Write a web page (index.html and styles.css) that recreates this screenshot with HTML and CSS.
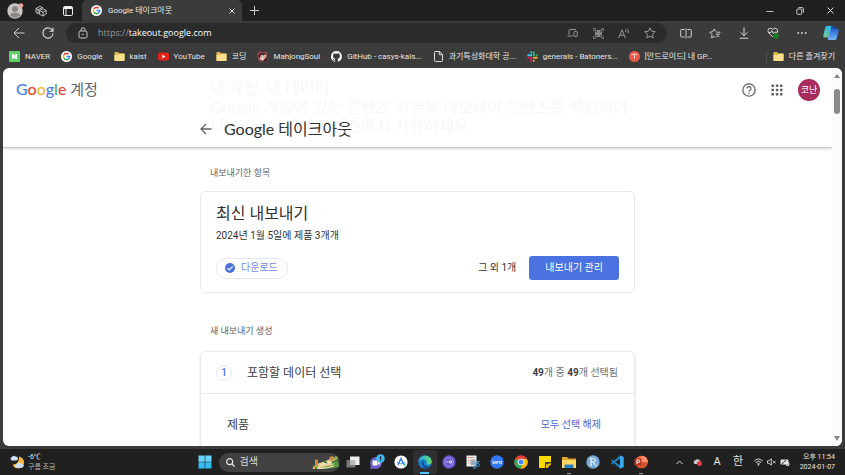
FILE: index.html
```html
<!DOCTYPE html>
<html lang="ko">
<head>
<meta charset="utf-8">
<meta name="viewport" content="width=device-width, initial-scale=1">
<title>Google 테이크아웃</title>
<link rel="stylesheet" href="styles.css">
</head>
<body>
<svg class="defs" aria-hidden="true">
  <symbol id="g" viewBox="0 0 24 24"><circle cx="12" cy="12" r="12" fill="#fff"/><g fill="none" stroke-width="3.6"><path d="M6.2 8.6A6.8 6.8 0 0 1 16.6 7" stroke="#ea4335"/><path d="M6.2 15.4a6.8 6.8 0 0 1 0-6.8" stroke="#fbbc05"/><path d="M16.4 17.2A6.8 6.8 0 0 1 6.2 15.4" stroke="#34a853"/><path d="M12 12h6.8a6.8 6.8 0 0 1-2.4 5.2" stroke="#4285f4"/></g></symbol>
  <symbol id="folder" viewBox="0 0 12 12"><path d="M.5 2q0-.8.8-.8h3l1.2 1.3h5.2q.8 0 .8.8v6.9q0 .8-.8.8H1.3q-.8 0-.8-.8z" fill="#e0b84f"/><path d="M.5 4.4h4l1.2-1h5.8v6.800q0 .8-.8.8H1.3q-.8 0-.8-.8z" fill="#f8df8b"/></symbol>
</svg>

<header class="browser">
  <div class="tabstrip">
    <button class="tool avatar-btn" aria-label="프로필"><svg width="18" height="18" viewBox="0 0 18 18"><circle cx="9" cy="9" r="7.7" fill="#c9c7c5"/><circle cx="9" cy="7" r="3" fill="#8b8885"/><path d="M4 13.5q0-3 5-3t5 3q-2 2.3-5 2.3t-5-2.3z" fill="#8b8885"/><circle cx="15" cy="3.600" r="2.300" fill="#f3a593"/></svg></button>
    <button class="tool workspace" aria-label="작업 영역"><svg width="12" height="12" viewBox="0 0 12 12" fill="none" stroke="#ccc" stroke-width=".9"><path d="M1 3.500 5 1.300l3 1.600M1 3.500v4l2 1.200M1 3.500l2 1.200 5-2.300M3 4.700v4.500M4.500 5.500 8 3.800l3.200 1.600v3.500L8 11 4.500 9.300zM4.500 5.500 8 7.200l3.200-1.800M8 7.200V11"/></svg></button>
    <button class="tool" aria-label="탭 작업 메뉴"><svg width="10" height="10" viewBox="0 0 10 10" fill="none" stroke="#eee"><rect x=".5" y=".5" width="9" height="9" rx="1.200"/><path d="M.5 2h9" stroke-width="2"/><path d="M3 3v6.500"/></svg></button>
    <div class="tab"><svg width="11" height="11"><use href="#g"/></svg><span>Google 테이크아웃</span><button class="plain" aria-label="탭 닫기"><svg width="6" height="6" viewBox="0 0 6 6" stroke="#ddd"><path d="m.5.5 5 5m0-5-5 5"/></svg></button></div>
    <button class="plain newtab" aria-label="새 탭"><svg width="9" height="9" viewBox="0 0 9 9" stroke="#ccc"><path d="M4.500 0v9M0 4.500h9"/></svg></button>
    <div class="window-controls">
      <button class="plain" aria-label="최소화"><svg width="8" height="8" viewBox="0 0 8 8" stroke="#bbb"><path d="M.5 4.500h7"/></svg></button>
      <button class="plain" aria-label="이전 크기로 복원"><svg width="8" height="8" viewBox="0 0 8 8" fill="none" stroke="#ccc"><rect x=".8" y="2" width="5" height="5.300" rx="1"/><path d="M2.500.6h3.700q1.200 0 1.200 1.200v3.700"/></svg></button>
      <button class="plain" aria-label="닫기"><svg width="7" height="7" viewBox="0 0 7 7" stroke="#ddd"><path d="m.5.5 6 6m0-6-6 6"/></svg></button>
    </div>
  </div>

  <div class="toolbar">
    <button class="tool" aria-label="뒤로"><svg width="12" height="12" viewBox="0 0 12 12" fill="none" stroke="#ccc"><path d="M11.500 6H1M6 1 1 6l5 5"/></svg></button>
    <button class="tool" aria-label="새로 고침"><svg width="12" height="12" viewBox="0 0 12 12" fill="none" stroke="#ddd" stroke-width="1.100"><path d="M10.800 4.200a5.100 5.100 0 1 0 .3 2.300M11 .8v3.500H7.600"/></svg></button>
    <div class="address">
      <svg width="10" height="12" viewBox="0 0 10 12" fill="none" stroke="#ccc"><rect x="1" y="4" width="8" height="7" rx="1.500"/><path d="M3 4V2.800a2 2 0 0 1 4 0V4"/><circle cx="5" cy="7.500" r=".4"/></svg>
      <a class="url" href="#"><span>https://</span>takeout.google.com</a>
      <div class="address-tools">
        <button class="plain" aria-label="앱 설치"><svg width="11" height="10" viewBox="0 0 11 10" fill="none" stroke="#999"><path d="M2 6.500v-4q0-1 1-1h6M.5 8h5.300"/><rect x="7" y="3.500" width="3.200" height="5" rx=".6"/></svg></button>
        <button class="plain" aria-label="QR 코드"><svg width="11" height="11" viewBox="0 0 11 11" fill="none" stroke="#999" stroke-width=".9"><path d="M.6 2.600v-2h2M8.400.6h2v2M10.400 8.400v2h-2M2.600 10.400h-2v-2"/><path d="M2.300 2.300h2.400v2.400H2.300zM6.500 2.300h2.200v2.400H6.500zM2.300 6.500h2.400v2.200H2.300zM6.500 6.500h2.200v2.200H6.500zM5.500 2v7M2 5.500h7"/></svg></button>
        <button class="plain" aria-label="소리내어 읽기"><svg width="12" height="11" viewBox="0 0 12 11" fill="none" stroke="#999"><path d="M.7 10 4 1.800 7.300 10M1.900 7.200h4.200M7 2q1.100.8 1 2.300M8.700.7q2 1.500 1.700 4.300"/></svg></button>
        <button class="plain" aria-label="즐겨찾기에 추가"><svg width="12" height="12" viewBox="0 0 12 12" fill="none" stroke="#999"><path d="m6 .9 1.600 3.300 3.600.5-2.600 2.600.6 3.600L6 9.200l-3.200 1.700.6-3.600L.8 4.700l3.600-.5z"/></svg></button>
      </div>
    </div>
    <button class="tool" aria-label="분할 화면"><svg width="12" height="11" viewBox="0 0 12 11" fill="none" stroke="#ccc"><path d="M4.500 1.500h-3q-.8 0-.8.8v5.900q0 .8.8.8h3M7.500 1.500h3q.8 0 .8.8v5.900q0 .8-.8.8h-3M6 .3v10.200"/></svg></button>
    <button class="tool" aria-label="즐겨찾기"><svg width="12" height="11" viewBox="0 0 12 11" fill="none" stroke="#ccc"><path d="M6.700 3.400 5.300.9 3.900 3.600.8 4.200 3 6.500l-.4 3.300 2.800-1.300 1.200.6M7.500 4.200h4M6.800 6.200h4M7.500 8.200h2.700"/></svg></button>
    <button class="tool" aria-label="다운로드"><svg width="10" height="12" viewBox="0 0 10 12" fill="none" stroke="#ddd"><path d="M5 .5v8M1.500 5.300 5 8.700l3.500-3.400M.8 11.200h8.400"/></svg></button>
    <button class="tool" aria-label="브라우저 기본 기능"><svg width="12" height="12" viewBox="0 0 12 12" fill="none" stroke="#ddd"><path d="M5.800 10 1.500 5.700Q.1 3.500 1.900 1.700 4 .2 5.800 2.300 7.700.2 9.700 1.700q1.700 1.700.6 3.800M1.500 5.500h2.300l1-1.800 1.700 3 .9-1.500h3"/><circle cx="9" cy="9" r="2.800" fill="#187c22" stroke="none"/></svg></button>
    <button class="tool" aria-label="설정 및 기타"><svg width="10" height="4" viewBox="0 0 10 4" fill="#ddd"><circle cx="1.300" cy="2" r=".9"/><circle cx="5" cy="2" r=".9"/><circle cx="8.700" cy="2" r=".9"/></svg></button>
    <button class="tool" aria-label="Copilot"><svg width="16" height="16" viewBox="0 0 16 16"><defs><linearGradient id="cp" x1="0" y1="0" x2="0" y2="1"><stop stop-color="#28b8ee"/><stop offset="1" stop-color="#76c98f"/></linearGradient><linearGradient id="cq" x1="0" y1="0" x2="0" y2="1"><stop stop-color="#225bd0"/><stop offset="1" stop-color="#79b6ff"/></linearGradient></defs><path d="M4 1h6q1.500 0 1 1.500L8.500 11q-.5 1.500-2 1.500H2q-2.200 0-1.600-2.500L2.300 2.400Q2.700 1 4 1z" fill="url(#cp)"/><path d="M9.500 3.500H14q2.200 0 1.600 2.500l-1.900 7.600Q13.300 15 12 15H6q-1.500 0-1-1.500L7.500 5q.5-1.500 2-1.500z" fill="url(#cq)"/><path d="M8.500 1H10q1.500 0 2 1.500l.5 1h-3Q8 3.500 7.500 5z" fill="#1648b2"/></svg></button>
  </div>

  <nav class="bookmarks" aria-label="즐겨찾기 모음">
    <a href="#"><svg width="11" height="11" viewBox="0 0 11 11"><rect width="11" height="11" rx="1" fill="#5fd068"/><path d="M3 8V3h1.700l1.700 2.400V3H8v5H6.400L4.700 5.600V8z" fill="#fff"/></svg>NAVER</a>
    <a href="#"><svg width="11" height="11"><use href="#g"/></svg>Google</a>
    <a href="#"><svg width="11" height="11"><use href="#folder"/></svg>kaist</a>
    <a href="#"><svg width="11" height="11" viewBox="0 0 11 11"><rect y="1.600" width="11" height="8" rx="2" fill="#e62117"/><path d="m4.300 3.700 3.300 1.900-3.300 1.900z" fill="#fff"/></svg>YouTube</a>
    <a href="#"><svg width="11" height="11"><use href="#folder"/></svg>코딩</a>
    <a href="#"><svg width="11" height="11" viewBox="0 0 11 11"><path d="M1 1.500 3 0l2 1.300L9 .4l1.800 2-.7 3.600.6 4.500H2L.2 5z" fill="#8f4a50"/><path d="m2.300 4.500 3-2 3.700 1.700-.8 4-2.500 1.500L3 8z" fill="#f1cfc2"/><path d="m1 5 2.500-3 5 .5L7 4.400 4 4 2.600 7zM6.500 9l3-3 1 4.500H6z" fill="#4c202b"/><path d="M3.600 5.600h1v1h-1zm3 0h1v1h-1z" fill="#69343b"/></svg>MahjongSoul</a>
    <a href="#"><svg width="11" height="11" viewBox="0 0 16 16"><path fill="#fff" d="M8 0a8 8 0 0 0-2.500 15.600c.4.100.5-.2.500-.4v-1.500c-2 .5-2.600-.5-2.800-1-.1-.3-.5-1-.9-1.200-.3-.2-.7-.5 0-.5s1.100.6 1.300.8c.7 1.200 1.900.9 2.400.7.100-.5.300-.9.500-1.100-1.800-.2-3.600-.9-3.600-4 0-.9.300-1.600.8-2.100-.1-.2-.4-1 .1-2.100 0 0 .7-.2 2.200.8a7.600 7.600 0 0 1 4 0c1.500-1 2.200-.8 2.200-.8.500 1.100.2 1.900.1 2.100.5.600.8 1.300.8 2.100 0 3.100-1.900 3.800-3.600 4 .3.200.5.700.5 1.500v2.200c0 .2.100.5.500.4A8 8 0 0 0 8 0z"/></svg>GitHub - casys-kais...</a>
    <a href="#"><svg width="11" height="11" viewBox="0 0 11 11" fill="none" stroke="#ddd"><path d="M2 .5h4.500L9.500 3.500v6q0 1-1 1h-6q-1 0-1-1v-8q0-1 .5-1zM6.300.5v3.200h3.200"/></svg>과기특성화대학 공...</a>
    <a href="#"><svg width="11" height="11" viewBox="0 0 11 11" fill="none" stroke-width="2" stroke-linecap="round"><path d="M1.200 4.200h3M4.200 1.200v.2" stroke="#36c5f0"/><path d="M6.800 1.200v3M9.700 4.200h.1" stroke="#2eb67d"/><path d="M6.800 6.800h3M6.800 9.700v.1" stroke="#ecb22e"/><path d="M4.200 6.800v3M1.200 6.800h.2" stroke="#e01e5a"/></svg>generals - Batoners...</a>
    <a href="#"><svg width="11" height="11" viewBox="0 0 11 11"><circle cx="5.500" cy="5.500" r="5.500" fill="#e9594b"/><path d="M3 4.300V3.200h5v1.100M5.500 3.200v4.500" fill="none" stroke="#ffd8d2"/></svg>[안드로이드] 내 GP...</a>
    <a class="others" href="#"><svg width="11" height="11"><use href="#folder"/></svg>다른 즐겨찾기</a>
  </nav>
</header>

<div class="viewport">
  <div class="page">
    <header class="masthead">
      <p class="intro">내 계정, 내 데이터<br>Google 계정에 있는 콘텐츠 사본을 내보내어 콘텐츠를 백업하거<br>나 Google 외부 서비스에서 사용하세요.</p>
      <div class="account-row">
        <a class="logo" href="#"><span class="word"><span class="blue">G</span><span class="red">o</span><span class="yellow">o</span><span class="blue">g</span><span class="green">l</span><span class="red">e</span></span> 계정</a>
        <button class="plain" aria-label="도움말"><svg width="14" height="14" viewBox="0 0 14 14" fill="none" stroke="#5f6368" stroke-width="1.300"><circle cx="7" cy="7" r="6.200"/><path d="M5 5.600a2 2 0 1 1 3 1.700q-1 .6-1 1.500M7 9.800v1.300"/></svg></button>
        <button class="plain" aria-label="Google 앱"><svg width="12" height="12" viewBox="0 0 12 12" fill="#5f6368"><path d="M.5.500h2.500v2.500H.500zM4.800.500h2.500v2.500H4.800zM9 .500h2.500v2.500H9zM.500 4.800h2.500v2.500H.500zM4.800 4.800h2.500v2.500H4.800zM9 4.800h2.500v2.500H9zM.500 9h2.500v2.500H.500zM4.800 9h2.500v2.500H4.800zM9 9h2.500v2.500H9z"/></svg></button>
        <button class="plain account" aria-label="Google 계정">코난</button>
      </div>
      <div class="title-row">
        <button class="plain" aria-label="뒤로"><svg width="12" height="12" viewBox="0 0 12 12" fill="none" stroke="#5f6368" stroke-width="1.300"><path d="M11.500 6H1.300M6 1 1 6l5 5"/></svg></button>
        <h1>Google 테이크아웃</h1>
      </div>
    </header>

    <main>
      <h2 class="label">내보내기한 항목</h2>
      <section class="card latest">
        <h3>최신 내보내기</h3>
        <p>2024년 1월 5일에 제품 3개개</p>
        <div class="actions">
          <button class="chip"><svg width="10" height="10" viewBox="0 0 10 10"><circle cx="5" cy="5" r="5" fill="#4a72e0"/><path d="m2.500 5.100 1.800 1.800 3.400-3.500" fill="none" stroke="#fff" stroke-width="1.200"/></svg>다운로드</button>
          <span class="more">그 외 1개</span>
          <button class="primary">내보내기 관리</button>
        </div>
      </section>
      <h2 class="label second">새 내보내기 생성</h2>
      <section class="card create">
        <div class="step"><span class="number">1</span><h3>포함할 데이터 선택</h3><span class="count"><b>49</b>개 중 <b>49</b>개 선택됨</span></div>
        <div class="products"><h4>제품</h4><button class="plain link">모두 선택 해제</button></div>
      </section>
    </main>
  </div>
  <div class="scrollbar" aria-hidden="true"><i class="up"></i><i class="thumb"></i><i class="down"></i></div>
</div>

<footer class="taskbar">
  <button class="plain weather"><svg width="15" height="14" viewBox="0 0 15 14"><path d="M9 1.500a6 6 0 1 1-6.500 8.200Q9.500 9 9 1.500z" fill="#f4b63f"/><path d="M2 5.500a1.800 1.800 0 0 1 0-3.500Q3.500-.300 5.500 1.500q2.300 0 2.500 2-.1 2-2 2zM6.500 12.800a2 2 0 0 1 .3-3.900q1.500-2.500 3.700-.6 3 .2 3.300 2.300-.2 2.200-2.300 2.200z" fill="#cfdff8"/></svg><span>-6℃<br><em>구름 조금</em></span></button>
  <div class="apps">
    <button class="app" aria-label="시작"><svg width="14" height="14" viewBox="0 0 14 14" fill="#35bdf2"><path d="M.5.500h6.200v6.200H.500zM7.300.500h6.200v6.200H7.300z" fill="#66d5fa"/><path d="M.500 7.300h6.200v6.200H.500zM7.300 7.300h6.200v6.200H7.300z"/></svg></button>
    <label class="search"><svg width="9" height="9" viewBox="0 0 9 9" fill="none" stroke="#eee" stroke-width="1.200"><circle cx="3.700" cy="3.700" r="3"/><path d="m6 6 2.600 2.600"/></svg><input type="text" placeholder="검색" aria-label="검색"><svg width="28" height="15" viewBox="0 0 28 15"><path d="M1 11q4-3 9-3l15-5 2 9q-12 3-26 1z" fill="#5b9b40"/><path d="m5 9 11-4 5-3 3 3-3 5-15 3z" fill="#e5cf93"/><path d="M3 5q2-2 3 1v6H3zM17 2l4-1 1 4-3 2z" fill="#c98b4c"/><path d="m8 10 11-3M5 13q8 1 17-2" fill="none" stroke="#f7e7b8" stroke-width="1.300"/><path d="M11 6l4 2M20 8l5-3" stroke="#287735" stroke-width="1.500"/><circle cx="24" cy="3" r="1.800" fill="#8abb4d"/><circle cx="2" cy="13" r="1.300" fill="#e2b24f"/></svg></label>
    <button class="app" aria-label="작업 보기"><svg width="14" height="12" viewBox="0 0 14 12"><path d="M.5 4h9v7.500h-9z" fill="#777"/><path d="M4 .5h9.500V9H4z" fill="#eee"/><path d="M4 4h5.500v5H4z" fill="#bbb"/></svg></button>
    <button class="app" aria-label="채팅"><svg width="16" height="16" viewBox="0 0 16 16"><path d="M7 3a6 6 0 1 1-2.600 11.500L1 15.300l.9-3.300A6 6 0 0 1 7 3z" fill="#6d62c8"/><rect x="3.500" y="6.500" width="5" height="5" rx="1" fill="#fff"/><path d="m8.800 8.500 2-1.500v4l-2-1.300z" fill="#fff"/><circle cx="11.500" cy="4.500" r="4.300" fill="#42b8f0"/><path d="m10.500 3.500 1.200-1v4.200" fill="none" stroke="#123"/></svg></button>
    <button class="app" aria-label="Android Studio"><svg width="14" height="14" viewBox="0 0 14 14"><circle cx="7" cy="7" r="6.600" fill="#fff"/><path d="m4 10 3-6.500L10 10" fill="none" stroke="#3978df" stroke-width="1.500"/><path d="M2.800 7.500q4.200 3 8.400 0" fill="none" stroke="#4a8ef0"/><circle cx="10.500" cy="9.500" r="1.300" fill="#3fd58a"/></svg></button>
    <button class="app active" aria-label="Edge"><svg width="14" height="14" viewBox="0 0 14 14"><defs><linearGradient id="eg"><stop stop-color="#24a9e8"/><stop offset="1" stop-color="#66da68"/></linearGradient></defs><circle cx="7" cy="7" r="6.700" fill="#1681cf"/><path d="M.4 6.500C1.200-.8 13.200-1.500 13.700 6.500q0 3-3.200 3-2.500 0-2-1.500Q9.600 5 6 4.300 2 4.300.4 6.500z" fill="url(#eg)"/><path d="M6 5.500q-4 3-.2 7Q8.500 14.300 12 11.300q-3 1-5.200-.8Q5 8.700 6 5.500z" fill="#11488f"/></svg></button>
    <button class="app" aria-label="Eclipse"><svg width="14" height="14" viewBox="0 0 14 14"><circle cx="7" cy="7" r="6.700" fill="#6655cc"/><circle cx="7" cy="7" r="4.200" fill="none" stroke="#b0a8ee" stroke-width=".8"/><path d="M4.500 7h2M7.500 6h2v2h-2z" stroke="#eee" fill="none" stroke-width=".9"/></svg></button>
    <button class="app" aria-label="캡처 도구"><svg width="14" height="14" viewBox="0 0 14 14"><rect x=".5" y=".5" width="10" height="11" fill="#eee"/><path d="M2 2.500h7M2.500 5.500h1M2.500 8h1" stroke="#cb5a46" stroke-dasharray="1.300 1"/><path d="M4.500 4.500h5v5.500h-5z" fill="#aaa"/><path d="m6 8.500 7.500-2M9 12.500 10.500 5" stroke="#6fb5dc"/><circle cx="12" cy="10" r="1.500" fill="none" stroke="#258bd0"/><circle cx="8.500" cy="12.300" r="1.300" fill="none" stroke="#258bd0"/></svg></button>
    <button class="app" aria-label="Baris"><svg width="14" height="14" viewBox="0 0 14 14"><circle cx="7" cy="7" r="6.700" fill="#3478f6"/><path d="M3 5.500v3h1.300V7H3M5.500 8.500v-2h1v2M7.500 8.500v-2h1M9.500 6v2.500M12 6.500h-1.200v2H12" fill="none" stroke="#fff" stroke-width=".8"/></svg></button>
    <button class="app" aria-label="Chrome"><svg width="14" height="14" viewBox="0 0 14 14"><circle cx="7" cy="7" r="6.700" fill="#ea4335"/><path d="M7 7 1.200 3.700A6.700 6.700 0 0 0 6.500 13.700L9 9z" fill="#34a853"/><path d="M7 4h6a6.700 6.700 0 0 1-6.500 9.700L9.500 8z" fill="#fbbc05"/><circle cx="7" cy="7" r="3.300" fill="#fff"/><circle cx="7" cy="7" r="2.500" fill="#4285f4"/></svg></button>
    <button class="app" aria-label="스티커 메모"><svg width="12" height="12" viewBox="0 0 12 12"><path d="M0 0h12v6H6v6H0z" fill="#ffda00"/><path d="M6 12V6h6v1l-5 5z" fill="#3d3d35"/><path d="M7 12V8.500L12 7v1.500L8.500 12z" fill="#e6b900"/></svg></button>
    <button class="app running" aria-label="파일 탐색기"><svg width="14" height="13" viewBox="0 0 14 13"><path d="M0 1h5l1.500 1.500H14V12H0z" fill="#dfa42c"/><path d="M0 4h14v8H0z" fill="#ffd662"/><path d="M2.500 12V9.500q0-1 1-1h7q1 0 1 1V12z" fill="#267fc4"/></svg></button>
    <button class="app" aria-label="R"><svg width="14" height="14" viewBox="0 0 14 14"><circle cx="7" cy="7" r="6.700" fill="#75aadb"/><path d="M5 3.500v7M3.900 3.600h3.600q2 0 2 1.700t-2 1.700H5m2.300 0 2.200 3.400h1M3.900 10.400h2.200" fill="none" stroke="#fff"/></svg></button>
    <button class="app" aria-label="Visual Studio Code"><svg width="14" height="14" viewBox="0 0 14 14"><path d="M10 .5 13.500 2v10L10 13.500 1 5.500l1-1L10 10.500v-7L2 9.500l-1-1z" fill="#2489ca"/><path d="M10 .5 13.500 2v10L10 13.500z" fill="#3ba9ee"/></svg></button>
    <button class="app running" aria-label="PowerPoint"><svg width="14" height="14" viewBox="0 0 14 14"><circle cx="7.500" cy="7" r="6.300" fill="#ed6c47"/><path d="M7.500.7A6.300 6.300 0 0 1 13.800 7H7.500z" fill="#ff8f6b"/><path d="M7.500 7h6.300a6.300 6.300 0 0 1-11 4z" fill="#d35230"/><rect x=".5" y="3.500" width="7" height="7" rx="1" fill="#b7371e"/><path d="M3 9V5h1.500q1.300 0 1.300 1.200T4.500 7.400H3" fill="none" stroke="#fff"/></svg></button>
  </div>
  <div class="tray">
    <button class="plain" aria-label="숨겨진 아이콘 표시"><svg width="7" height="5" viewBox="0 0 7 5" fill="none" stroke="#ddd"><path d="m.5 4 3-3 3 3"/></svg></button>
    <button class="plain" aria-label="OneDrive"><svg width="9" height="8" viewBox="0 0 9 8"><path d="M2 6a1.800 1.800 0 0 1 0-3.500Q4 .3 6.500 2 8.500 3 8 6z" fill="#ccc"/><circle cx="6.500" cy="5.500" r="2.500" fill="#e23b42"/></svg></button>
    <button class="plain ime" aria-label="입력 도구">A</button>
    <button class="plain ime">한</button>
    <button class="plain status" aria-label="네트워크, 소리, 배터리"><svg width="9" height="8" viewBox="0 0 9 8" fill="none" stroke="#eee" stroke-width=".9"><path d="M.4 3Q4.500-1 8.600 3M1.800 4.500q2.700-2.600 5.400 0M3.200 6q1.300-1.200 2.600 0"/><circle cx="4.500" cy="7" r=".4"/></svg><svg width="9" height="8" viewBox="0 0 9 8" fill="none" stroke="#ddd" stroke-width=".9"><path d="M.5 2.700H2L4.300.800v6.400L2 5.300H.500zM6 2.800l2.500 2.500m0-2.500L6 5.300"/></svg><svg width="10" height="8" viewBox="0 0 10 8"><rect x=".5" y="1.500" width="8" height="5" rx="1" fill="#ddd"/><path d="m2 6 4-4" stroke="#333"/><circle cx="7.500" cy="6" r="2" fill="#eee"/><path d="m6.700 6 .6.700 1.200-1.300" stroke="#333" stroke-width=".6" fill="none"/></svg></button>
    <time datetime="2024-01-07T23:54">오후 11:54<br>2024-01-07</time>
  </div>
</footer>
</body>
</html>
```
FILE: styles.css
```css
* { box-sizing: border-box; }

body {
  margin: 0;
  height: 100vh;
  display: flex;
  flex-direction: column;
  overflow: hidden;
  background: #3b3b3b;
  color: #e6e6e6;
  font: 8px/12px Roboto, "Noto Sans CJK KR", sans-serif;
}

button, input { font: inherit; color: inherit; }
button { border: 0; background: none; padding: 0; }
a { color: inherit; text-decoration: none; }
h1, h2, h3, h4, p { margin: 0; font-weight: 400; }
svg { flex: none; display: block; }
.defs { position: absolute; width: 0; height: 0; }
.plain { display: flex; align-items: center; justify-content: center; }

.tool {
  width: 29px;
  flex: none;
  display: flex;
  align-items: center;
  justify-content: center;
}

/* Browser frame */
.tabstrip { display: flex; height: 21px; background: #202020; }
.workspace { width: 24px; }
.tab {
  display: flex;
  align-items: center;
  gap: 6px;
  width: 160px;
  padding: 0 7px 0 9px;
  border-radius: 5px 5px 0 0;
  background: #3b3b3b;
}
.tab span { flex: 1; }
.newtab { width: 24px; }
.window-controls { display: flex; margin-left: auto; }
.window-controls button { width: 30px; }

.toolbar { display: flex; height: 24px; padding: 2px 0 2px 4px; }
.address {
  flex: 1;
  display: flex;
  align-items: center;
  gap: 10px;
  margin: 0 4px;
  padding: 0 4px 0 12px;
  border-radius: 10px;
  background: #2b2b2b;
}
.url { flex: 1; font-family: "Open Sans", sans-serif; font-size: 9px; color: #fff; }
.url span { color: #999; }
.address-tools { display: flex; }
.address-tools button { width: 26px; }

.bookmarks {
  display: flex;
  align-items: center;
  gap: 11px;
  height: 23px;
  padding: 0 10px 0 9px;
  white-space: nowrap;
}
.bookmarks a { display: flex; align-items: center; gap: 5px; }
.bookmarks .others {
  margin-left: auto;
  padding-left: 6px;
  border-left: 1px solid #505050;
}

/* Web page */
.viewport {
  flex: 1;
  min-height: 0;
  display: flex;
  margin: 0 3px;
  overflow: hidden;
  border-radius: 6px;
  background: #fff;
  color: #3c4043;
}
.page { flex: 1; overflow: hidden; }
.masthead {
  position: relative;
  height: 80px;
  border-bottom: 1px solid #c8cccb;
  box-shadow: 0 1px 3px #d5d8d7;
}
.intro {
  position: absolute;
  top: 10px;
  left: calc(50% - 207px);
  color: #f7f7f7;
  font-family: Lato, "Noto Sans CJK KR", sans-serif;
  font-size: 16px;
  line-height: 19px;
  white-space: nowrap;
}
.account-row {
  position: relative;
  display: flex;
  align-items: center;
  gap: 15px;
  height: 43px;
  padding: 0 12px 0 13px;
}
.logo { margin-right: auto; color: #5f6368; font-size: 15px; line-height: 20px; }
.word { font-family: Lato, sans-serif; font-size: 16px; font-weight: 500; }
.blue { color: #4a7cec; }
.red { color: #db4a3f; }
.yellow { color: #eebc38; }
.green { color: #55a862; }
.account {
  width: 22px;
  height: 22px;
  border-radius: 50%;
  background: #a72b5c;
  color: #fff;
  font-size: 9px;
}
.title-row {
  position: relative;
  display: flex;
  align-items: center;
  gap: 12px;
  width: 435px;
  height: 36px;
  margin: 0 auto;
}
h1 {
  color: #303134;
  font: 16px/20px Lato, "Noto Sans CJK KR", sans-serif;
}

main { width: 435px; margin: 0 auto; padding-top: 19px; }
.label { padding-left: 10px; font-size: 9px; line-height: 12px; color: #5f6368; }
.second { margin-top: 32px; }
.card { border: 1px solid #e8eaed; border-radius: 5px; }
.latest { margin-top: 12px; padding: 11px 15px 12px; color: #303134; }
.latest h3 { font-size: 16px; line-height: 22px; }
.latest p { font-size: 10px; line-height: 22px; }
.actions { display: flex; align-items: center; margin-top: 9px; }
.chip {
  display: flex;
  align-items: center;
  gap: 6px;
  height: 21px;
  padding: 0 9px 0 8px;
  border: 1px solid #e4e6ea;
  border-radius: 11px;
  color: #6d8ae6;
  font-size: 10px;
}
.more { margin-left: auto; font-size: 10px; }
.primary {
  height: 24px;
  margin-left: 13px;
  padding: 0 16px;
  border-radius: 3px;
  background: #4a72e0;
  color: #fff;
  font-size: 10px;
}
.create { height: 240px; margin-top: 14px; box-shadow: 0 1px 2px #d5d7da; }
.step {
  display: flex;
  align-items: center;
  height: 42px;
  padding: 0 16px 0 15px;
  border-bottom: 1px solid #e8eaed;
}
.number {
  width: 16px;
  height: 16px;
  margin-right: 15px;
  border: 1px solid #dfe6fa;
  border-radius: 50%;
  color: #4a72e0;
  font-size: 10px;
  font-weight: 500;
  line-height: 14px;
  text-align: center;
}
.step h3, h4 { font-size: 12px; line-height: 16px; }
.count { margin-left: auto; color: #6b6f73; font-size: 10px; }
.count b { color: #3c4043; }
.products { display: flex; justify-content: space-between; padding: 23px 33px 0 26px; }
.link { color: #4c68cf; font-size: 10px; }

.scrollbar {
  display: flex;
  flex-direction: column;
  align-items: center;
  width: 10px;
  padding: 6px 0 5px;
  background: #fbfbfb;
}
.up, .down { border: 3px solid transparent; }
.up { border-top: 0; border-bottom: 4px solid #858585; }
.thumb { width: 6px; height: 25px; margin: 11px 0 auto; border-radius: 3px; background: #8a8a8a; }
.down { border-bottom: 0; border-top: 5px solid #858585; }

/* Desktop taskbar */
.taskbar {
  display: grid;
  grid-template-columns: 1fr auto 1fr;
  height: 26px;
  margin-top: 3px;
  background: #202020;
}
.weather {
  justify-self: start;
  gap: 3px;
  padding-left: 10px;
  font-size: 7px;
  line-height: 10px;
  text-align: left;
}
em { font-style: normal; color: #b5b5b5; }
.apps { display: flex; align-items: center; }
.app {
  display: flex;
  align-items: center;
  justify-content: center;
  width: 24px;
  height: 24px;
  border-radius: 3px;
  border: solid transparent;
  border-width: 2px 0;
}
.active { background: #303030; }
.active, .running { background-repeat: no-repeat; background-position: bottom; background-origin: border-box; }
.active { background-image: linear-gradient(#4cc2ff, #4cc2ff); background-size: 9px 2px; }
.running { background-image: linear-gradient(#999, #999); background-size: 4px 1px; }
.search {
  display: flex;
  align-items: center;
  gap: 5px;
  width: 121px;
  height: 19px;
  margin: 0 1px 0 2px;
  padding: 0 0 0 7px;
  border-radius: 10px;
  background: #414141;
}
.search input {
  flex: 1;
  min-width: 0;
  padding: 0;
  border: 0;
  outline: 0;
  background: none;
  font-size: 10px;
}
.search input::placeholder { color: #ddd; opacity: 1; }
.tray { display: flex; align-items: center; justify-content: flex-end; gap: 10px; padding-right: 10px; }
.ime { width: 11px; font-size: 11px; }
.status { gap: 4px; }
time { font-size: 7px; line-height: 10px; text-align: right; }
```
